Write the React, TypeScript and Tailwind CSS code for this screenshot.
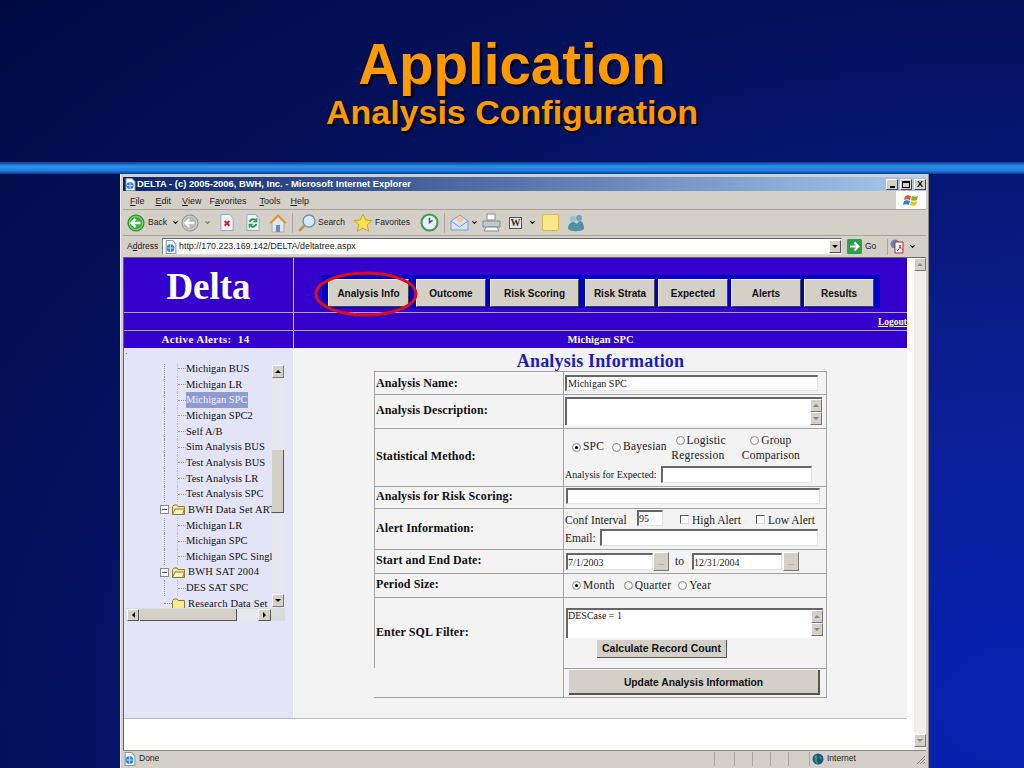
import type { ReactNode } from "react";
import { ChevronDown, Minus } from "lucide-react";

const navItems = [
  { label: "Analysis Info", cls: "ml-[6px] w-[81px]" },
  { label: "Outcome", cls: "ml-[7px] w-[70px]" },
  { label: "Risk Scoring", cls: "ml-[4px] w-[89px]" },
  { label: "Risk Strata", cls: "ml-[6px] w-[70px]" },
  { label: "Expected", cls: "ml-[3px] w-[70px]" },
  { label: "Alerts", cls: "ml-[3px] w-[70px]" },
  { label: "Results", cls: "ml-[3px] w-[70px]" },
];

const treeItems = [
  { label: "Michigan BUS" },
  { label: "Michigan LR" },
  { label: "Michigan SPC", selected: true },
  { label: "Michigan SPC2" },
  { label: "Self A/B" },
  { label: "Sim Analysis BUS" },
  { label: "Test Analysis BUS" },
  { label: "Test Analysis LR" },
  { label: "Test Analysis SPC" },
  { label: "BWH Data Set ART", folder: true },
  { label: "Michigan LR" },
  { label: "Michigan SPC" },
  { label: "Michigan SPC Single" },
  { label: "BWH SAT 2004", folder: true },
  { label: "DES SAT SPC" },
  { label: "Research Data Set", folder: true, closed: true },
];

function IeDoc({ size = 13 }: { size?: number }) {
  return (
    <svg width={size} height={size} viewBox="0 0 13 13" className="shrink-0">
      <path d="M2 .5h6l3 3v9H2z" fill="#fff" stroke="#7f9db9" />
      <circle cx="6" cy="7.5" r="3.6" fill="#2f7fd6" />
      <path d="M3 7.5h6M6 4v7" stroke="#bfe0ff" strokeWidth="1" />
    </svg>
  );
}

function CircleArrow({ color, edge }: { color: string; edge: string }) {
  return (
    <svg width="18" height="18" viewBox="0 0 20 20" className="shrink-0">
      <circle cx="10" cy="10" r="9" fill={color} stroke={edge} />
      <circle cx="10" cy="10" r="7.5" fill="none" stroke="#fff" strokeOpacity="0.45" />
      <path d="M15 10H6M9.5 5.500 5 10l4.500 4.500" fill="none" stroke="#fff" strokeWidth="2.6" />
    </svg>
  );
}

function ToolIcons() {
  return (
    <>
      <svg width="16" height="19" viewBox="0 0 17 19" className="ml-[8px]">
        <path d="M2 1h9l4 4v13H2z" fill="#eef2fa" stroke="#8fa6c8" />
        <path d="M6 8l5 5M11 8l-5 5" stroke="#d8232a" strokeWidth="2.2" />
      </svg>
      <svg width="16" height="19" viewBox="0 0 17 19" className="ml-[10px]">
        <path d="M2 1h9l4 4v13H2z" fill="#eef2fa" stroke="#8fa6c8" />
        <path d="M5 9a3.6 3.6 0 0 1 6.500-1.500M12 11a3.600 3.600 0 0 1-6.500 1.500" fill="none" stroke="#23994a" strokeWidth="2" />
        <path d="M12.500 5v3.500H9M4.500 15v-3.500H8" fill="none" stroke="#23994a" strokeWidth="1.300" />
      </svg>
      <svg width="20" height="20" viewBox="0 0 20 20" className="ml-[7px]">
        <path d="M10 2 2 10h2v9h12v-9h2z" fill="#dfe6f2" stroke="#b9a58a" />
        <path d="M10 1 1 10h3l6-6 6 6h3z" fill="#e8902c" />
        <rect x="8" y="12" width="4" height="7" fill="#5b8fd0" />
      </svg>
      <span className="ml-[4px] h-[20px] w-px bg-[#aaa69c]" />
      <svg width="20" height="20" viewBox="0 0 20 20" className="ml-[4px]">
        <circle cx="12" cy="8" r="6" fill="#d7ebfb" stroke="#6d93bd" strokeWidth="1.400" />
        <path d="M7.500 12.500 2 18" stroke="#c9924a" strokeWidth="2.600" />
      </svg>
      <span className="ml-px w-[27px] text-[8.5px] text-[#222]">Search</span>
      <svg width="20" height="20" viewBox="0 0 20 20" className="ml-[8px]">
        <path d="m10 1 2.700 6 6.300.6-4.800 4.200 1.500 6.400L10 15l-5.700 3.200 1.500-6.400L1 7.600 7.300 7z" fill="#fbe24c" stroke="#c9a520" />
      </svg>
      <span className="ml-[2px] w-[36px] text-[8.5px] text-[#222]">Favorites</span>
      <svg width="19" height="19" viewBox="0 0 18 18" className="ml-[9px]">
        <circle cx="9" cy="9" r="7.600" fill="#e9eff5" stroke="#3f9a52" strokeWidth="2" />
        <path d="M9 4.500V9l3-2" fill="none" stroke="#2a5fa0" strokeWidth="1.500" />
      </svg>
      <span className="ml-[5px] h-[20px] w-px bg-[#aaa69c]" />
      <svg width="20" height="19" viewBox="0 0 20 19" className="ml-[5px]">
        <path d="M1 8 10 2l8 6v9H1z" fill="#d4e4f6" stroke="#7f9db9" />
        <path d="m1 8 8.500 6L18 8" fill="none" stroke="#7f9db9" />
        <circle cx="10" cy="6" r="3" fill="#f3c79a" />
      </svg>
      <ChevronDown size={7} strokeWidth={4} className="ml-px text-black" />
      <svg width="19" height="19" viewBox="0 0 19 19" className="ml-[4px]">
        <path d="M5 1h8v6H5z" fill="#fff" stroke="#8a8a8a" />
        <path d="M1 8h17v6H1z" fill="#c3c6ce" stroke="#85888f" />
        <path d="M4 14h11l2 4H2z" fill="#f4f4f4" stroke="#8a8a8a" />
      </svg>
      <span className="ml-[8px] flex h-[12px] w-[13px] items-center justify-center border border-[#555] bg-[#e8e8e2] font-['Liberation_Serif',serif] text-[10px] leading-none font-bold text-[#333]">
        W
      </span>
      <ChevronDown size={7} strokeWidth={4} className="ml-[7px] text-black" />
      <span className="ml-[6px] h-[17px] w-[17px] rounded-[2px] border border-[#e0b840] bg-[#fbe88a]" />
      <svg width="18" height="18" viewBox="0 0 18 18" className="ml-[8px]">
        <circle cx="6" cy="5" r="3" fill="#8ec3d4" />
        <circle cx="12" cy="4" r="3" fill="#6aa5b8" />
        <path d="M1 15c0-5 3-7 5-7s3 1 4 2c1-2 2-3 3-3 3 0 4 4 4 8-3 3-13 3-16 0z" fill="#4e93a8" />
      </svg>
    </>
  );
}

function Radio({ on = false, className = "" }: { on?: boolean; className?: string }) {
  return (
    <span className={`inline-flex h-[9px] w-[9px] shrink-0 items-center justify-center rounded-full border border-[#888] bg-[#f8f8f8] ${className}`}>
      {on && <span className="h-[3px] w-[3px] rounded-full bg-black" />}
    </span>
  );
}

function Check({ className }: { className: string }) {
  return <span className={`inline-block h-[9px] w-[9px] shrink-0 self-center border border-t-[#555] border-r-[#ddd] border-b-[#ddd] border-l-[#555] bg-white ${className}`} />;
}

function Field({ className, children }: { className: string; children?: ReactNode }) {
  return (
    <div className={`flex shrink-0 items-center overflow-hidden border-t-2 border-r border-b border-l-2 border-t-[#666] border-r-[#e2e2e2] border-b-[#e2e2e2] border-l-[#666] bg-white text-[10px] text-[#222] ${className}`}>
      {children}
    </div>
  );
}

function Arrow({ up, dark }: { up?: boolean; dark?: boolean }) {
  const tip = up
    ? dark ? "border-b-[3px] border-b-black" : "border-b-[3px] border-b-[#888]"
    : dark ? "border-t-[3px] border-t-black" : "border-t-[3px] border-t-[#888]";
  return (
    <span className="flex h-[13px] w-[12px] shrink-0 items-center justify-center border border-t-white border-r-[#777] border-b-[#777] border-l-white bg-[#d4d0c8]">
      <span className={`h-0 w-0 border-x-[3px] border-x-transparent ${tip}`} />
    </span>
  );
}

function FormRow({ label, height, labelPad = "pb-[3px]", children }: { label?: string; height: string; labelPad?: string; children: ReactNode }) {
  return (
    <div className={`flex ${height}`}>
      <div className={`flex w-[189px] items-center pl-px text-[12px] font-bold tracking-[0.1px] text-[#111] ${labelPad} ${label ? "border-t border-l border-t-[#a3a3a3] border-l-[#a3a3a3]" : ""}`}>
        {label}
      </div>
      <div className="w-[263px] border-t border-l border-t-[#a3a3a3] border-l-[#a3a3a3]">{children}</div>
    </div>
  );
}

function SmallBtn({ className = "" }: { className?: string }) {
  return (
    <span className={`flex h-[19px] w-[16px] shrink-0 items-end justify-center border border-t-white border-r-[#777] border-b-[#777] border-l-white bg-[#d4d0c8] pb-[3px] text-[8px] leading-none text-[#777] ${className}`}>
      ...
    </span>
  );
}

function TreePanel() {
  return (
    <div className="relative pt-[16px] pl-[2px]">
      <span className="absolute top-[5px] left-[2px] h-px w-px bg-[#777]" />
      <div className="w-[159px]">
        <div className="flex h-[244px]">
          <div className="w-[146px] overflow-hidden font-['Liberation_Serif',serif] text-[10.5px] text-[#111]">
            <div className="-mt-[3px]">
              {treeItems.map((item, i) =>
                item.folder ? (
                  <div key={i} className="flex h-[15.66px] items-center whitespace-nowrap">
                    <span className="ml-[34px] flex w-[12px] shrink-0 items-center">
                      {item.closed ? (
                        <span className="ml-[4px] h-0 w-[8px] border-t border-dotted border-[#888]" />
                      ) : (
                        <span className="flex h-[9px] w-[9px] items-center justify-center border border-[#888] bg-white">
                          <Minus size={7} strokeWidth={3} className="text-[#333]" />
                        </span>
                      )}
                    </span>
                    <svg width="13" height="11" viewBox="0 0 13 11" className="mr-[3px] shrink-0">
                      <path d="M.5 2.500 2 1h3l1 1.500h6.500v8H.5z" fill="#fbe89a" stroke="#8c7a3a" />
                      {!item.closed && <path d="M.5 10.500 3 5h9.500l-2 5.500z" fill="#fdf3bb" stroke="#8c7a3a" />}
                    </svg>
                    <span className="tracking-[0.15px]">{item.label}</span>
                  </div>
                ) : (
                  <div key={i} className="flex h-[15.66px] items-center whitespace-nowrap">
                    <span className="ml-[38px] h-full w-[13px] shrink-0 border-l border-dotted border-[#999]" />
                    <span className="h-full w-px shrink-0 border-l border-dotted border-[#bbb]" />
                    <span className="h-0 w-[8px] shrink-0 border-t border-dotted border-[#999]" />
                    <span className={item.selected ? "bg-[#8f9bcf] text-[#eef]" : ""}>{item.label}</span>
                  </div>
                ),
              )}
            </div>
          </div>
          <div className="flex w-[12px] flex-col bg-[#e7e6ec] pt-px pb-px">
            <Arrow up dark />
            <div className="mt-[72px] h-[63px] w-[12px] border-r border-b border-r-[#555] border-b-[#555] bg-[#d4d0c8]" />
            <div className="flex-1" />
            <Arrow dark />
          </div>
        </div>
        <div className="flex h-[13px] items-center bg-[#dcdbdc]">
          <span className="ml-px flex h-[12px] w-[12px] items-center justify-center border border-t-white border-r-[#555] border-b-[#555] border-l-white bg-[#d4d0c8]">
            <span className="h-0 w-0 border-y-[3px] border-r-[3px] border-y-transparent border-r-black" />
          </span>
          <span className="ml-px h-[12px] w-[97px] border-r border-b border-r-[#555] border-b-[#555] bg-[#d4d0c8]" />
          <span className="h-[12px] w-[21px] bg-[#e7e6ec]" />
          <span className="flex h-[12px] w-[13px] items-center justify-center border border-t-white border-r-[#555] border-b-[#555] border-l-white bg-[#d4d0c8]">
            <span className="h-0 w-0 border-y-[3px] border-l-[3px] border-y-transparent border-l-black" />
          </span>
        </div>
      </div>
    </div>
  );
}

function AnalysisForm() {
  return (
    <div className="mx-auto w-[453px] font-['Liberation_Serif',serif]">
      <div className="flex h-[23px] items-center justify-center pt-[3px] text-[18px] font-bold tracking-[0.2px] text-[#1a1ac8]">
        Analysis Information
      </div>
      <div className="border-r border-b border-[#a3a3a3] text-[11.5px] text-[#222]">
        <FormRow label="Analysis Name:" height="h-[23px]" labelPad="pb-0">
          <Field className="mt-[3px] ml-px h-[16px] w-[253px] pl-px">Michigan SPC</Field>
        </FormRow>
        <FormRow label="Analysis Description:" height="h-[34px]">
          <div className="mt-[2px] ml-px flex h-[28px] w-[257px] border-t-2 border-l-2 border-[#666] bg-white">
            <div className="flex-1" />
            <div className="flex flex-col">
              <Arrow up />
              <Arrow />
            </div>
          </div>
        </FormRow>
        <FormRow label="Statistical Method:" height="h-[58px]">
          <div className="flex h-[36px] items-center pl-[8px] tracking-[0.2px]">
            <Radio on />
            <span className="ml-[2px]">SPC</span>
            <Radio className="ml-[8px]" />
            <span className="ml-[2px]">Bayesian</span>
            <div className="ml-[3px] w-[56px] pt-px text-center leading-[15px]">
              <div className="flex items-center justify-end gap-[2px]"><Radio /><span>Logistic</span></div>
              <div>Regression</div>
            </div>
            <div className="ml-[16px] w-[58px] pt-px text-center leading-[15px]">
              <div className="flex items-center justify-center gap-[2px]"><Radio /><span>Group</span></div>
              <div>Comparison</div>
            </div>
          </div>
          <div className="flex h-[18px] items-center pl-px text-[10px]">
            Analysis for Expected:
            <Field className="ml-[4px] h-[17px] w-[151px]" />
          </div>
        </FormRow>
        <FormRow label="Analysis for Risk Scoring:" height="h-[22px]">
          <Field className="mt-px ml-[2px] h-[16px] w-[254px]" />
        </FormRow>
        <FormRow label="Alert Information:" height="h-[41px]">
          <div className="flex h-[20px] items-end pl-px">
            <span className="w-[63px]">Conf Interval</span>
            <Field className="mt-px ml-[9px] h-[16px] w-[26px] self-start">95</Field>
            <Check className="ml-[17px]" />
            <span className="ml-[3px]">High Alert</span>
            <Check className="ml-[15px]" />
            <span className="ml-[3px]">Low Alert</span>
          </div>
          <div className="flex h-[17px] pl-px">
            <span className="w-[28px] pt-px">Email:</span>
            <Field className="ml-[7px] h-[17px] w-[218px]" />
          </div>
        </FormRow>
        <FormRow label="Start and End Date:" height="h-[24px]">
          <div className="flex h-full items-center pl-[2px]">
            <Field className="h-[17px] w-[87px]">7/1/2003</Field>
            <SmallBtn />
            <span className="ml-[6px] w-[17px]">to</span>
            <Field className="h-[17px] w-[90px]">12/31/2004</Field>
            <SmallBtn className="ml-px" />
          </div>
        </FormRow>
        <FormRow label="Period Size:" height="h-[24px]">
          <div className="flex h-full items-center pl-[8px] tracking-[0.2px]">
            <Radio on />
            <span className="ml-[2px]">Month</span>
            <Radio className="ml-[9px]" />
            <span className="ml-[2px]">Quarter</span>
            <Radio className="ml-[7px]" />
            <span className="ml-[2px]">Year</span>
          </div>
        </FormRow>
        <FormRow label="Enter SQL Filter:" height="h-[71px]">
          <div className="mt-[10px] ml-[2px] flex h-[30px] w-[257px] border-t-2 border-l-2 border-[#666] bg-white text-[10px]">
            <div className="flex-1 leading-[12px]">DESCase = 1</div>
            <div className="flex flex-col">
              <Arrow up />
              <Arrow />
            </div>
          </div>
          <div className="mt-[2px] ml-[33px] flex h-[18px] w-[130px] items-center justify-center border-r border-b border-r-[#555] border-b-[#555] bg-[#d4d0c8] font-['Liberation_Sans',sans-serif] text-[10.5px] font-bold text-[#111]">
            Calculate Record Count
          </div>
        </FormRow>
        <FormRow height="h-[29px]">
          <div className="mt-px ml-[5px] flex h-[25px] w-[251px] items-center justify-center border-r-2 border-b-2 border-r-[#555] border-b-[#555] bg-[#d4d0c8] pt-[3px] font-['Liberation_Sans',sans-serif] text-[10.3px] font-bold text-[#111]">
            Update Analysis Information
          </div>
        </FormRow>
      </div>
    </div>
  );
}

function PageContent() {
  return (
    <div className="flex w-[783px] flex-col">
      <div className="flex h-[55px] border-b border-[#a9a0f0] bg-[#3300cc]">
        <div className="flex w-[170px] items-center justify-center border-r border-[#c9c4f5] pt-[4px] font-['Liberation_Serif',serif] text-[37px] font-bold text-white">
          Delta
        </div>
        <div className="relative flex-1">
          <div className="mt-[17px] ml-[28px] flex h-[33px] w-[558px] items-start bg-[#0000c8] pt-[4px]">
            {navItems.map((n) => (
              <div key={n.label} className={`flex h-[28px] items-center justify-center border border-t-[#f0f0f0] border-r-[#444] border-b-[#444] border-l-[#f0f0f0] bg-[#d4d0c8] font-['Liberation_Sans',sans-serif] text-[10px] font-bold text-[#111] ${n.cls}`}>
                {n.label}
              </div>
            ))}
          </div>
          <svg width="104" height="48" viewBox="0 0 104 48" className="absolute top-[12px] left-[20px]">
            <ellipse cx="52" cy="24" rx="50" ry="21" fill="none" stroke="#d8101c" strokeWidth="3" />
          </svg>
        </div>
      </div>
      <div className="flex h-[18px] border-b border-[#a9a0f0] bg-[#3300cc]">
        <div className="w-[170px] border-r border-[#c9c4f5]" />
        <div className="flex-1 pt-px text-right font-['Liberation_Serif',serif] text-[9.5px] leading-[17px] font-bold text-white underline">
          Logout
        </div>
      </div>
      <div className="flex h-[17px] bg-[#3300cc] font-['Liberation_Serif',serif] text-[11px] leading-[17px] font-bold text-white">
        <div className="w-[170px] border-r border-[#c9c4f5] pr-[6px] text-center tracking-[0.4px]">Active Alerts:&nbsp; 14</div>
        <div className="flex-1 text-center text-[10.5px] tracking-[0.1px]">Michigan SPC</div>
      </div>
      <div className="flex h-[371px] border-b border-[#bbb]">
        <div className="w-[170px] border-r border-[#fff] bg-[#e4e4f8]">
          <TreePanel />
        </div>
        <div className="flex-1 bg-[#f3f3f3]">
          <AnalysisForm />
        </div>
      </div>
    </div>
  );
}

export default function App() {
  return (
    <div className="flex h-[768px] w-[1024px] flex-col overflow-hidden bg-[radial-gradient(ellipse_at_100%_92%,#0822b4_0%,#0a1e90_35%,#03115f_68%,#000a42_100%)] font-['Liberation_Sans',sans-serif]">
      <div className="flex h-[162px] flex-col items-center pt-[33px] font-bold text-[#ff9900] [text-shadow:2px_2px_1px_#000]">
        <div className="text-[56.5px] leading-[64px]">Application</div>
        <div className="-mt-[3px] text-[34px] leading-[36px]">Analysis Configuration</div>
      </div>
      <div className="h-[12px] bg-[linear-gradient(180deg,#0a3a90_0%,#2a90ea_35%,#2080e0_70%,#0a3a90_100%)]" />

      <div className="ml-[120px] flex w-[809px] flex-1 flex-col border-r border-l border-r-[#888] border-l-[#eee] bg-[#d4d0c8] px-[2px] pt-[3px] text-[#222]">
        <div className="flex h-[14px] items-center bg-[linear-gradient(90deg,#0a246a,#a6caf0)] pl-[1px]">
          <IeDoc />
          <span className="flex-1 text-[9.4px] font-bold text-white">DELTA - (c) 2005-2006, BWH, Inc. - Microsoft Internet Explorer</span>
          <span className="flex h-[11px] w-[12px] items-end justify-center border border-t-white border-r-[#444] border-b-[#444] border-l-white bg-[#d4d0c8] pb-px">
            <span className="h-[2px] w-[5px] bg-black" />
          </span>
          <span className="ml-[2px] flex h-[11px] w-[12px] items-center justify-center border border-t-white border-r-[#444] border-b-[#444] border-l-white bg-[#d4d0c8]">
            <span className="h-[7px] w-[8px] border border-t-2 border-black" />
          </span>
          <span className="ml-[2px] flex h-[11px] w-[12px] items-center justify-center border border-t-white border-r-[#444] border-b-[#444] border-l-white bg-[#d4d0c8] text-[9px] leading-none font-bold text-black">
            X
          </span>
        </div>
        <div className="flex h-[19px] items-center border-b border-[#a8a49c] pl-[7px] text-[9px]">
          <div className="flex flex-1 pt-[3px]">
            <span><u>F</u>ile</span>
            <span className="ml-[11px]"><u>E</u>dit</span>
            <span className="ml-[11px]"><u>V</u>iew</span>
            <span className="ml-[8px]">F<u>a</u>vorites</span>
            <span className="ml-[13px]"><u>T</u>ools</span>
            <span className="ml-[10px]"><u>H</u>elp</span>
          </div>
          <span className="flex h-[18px] w-[30px] items-center justify-center bg-white">
            <svg width="17" height="15" viewBox="0 0 15 15">
              <path d="M1 3c2-1 4-1 6 0L6 7C4 6 2 6 0 7z" fill="#e2572a" />
              <path d="M8 3c2 1 4 1 6 0l-1 4c-2 1-4 1-6 0z" fill="#7cb52e" />
              <path d="M0 8c2-1 4-1 6 0l-1 4c-2-1-4-1-6 0z" fill="#2f7fd6" />
              <path d="M7 8c2 1 4 1 6 0l-1 4c-2 1-4 1-6 0z" fill="#f4c020" />
            </svg>
          </span>
        </div>
        <div className="flex h-[26px] items-center border-b border-[#a8a49c] pl-[4px]">
          <CircleArrow color="#3fae3f" edge="#2a7a2a" />
          <span className="ml-[3px] w-[18px] text-[8.5px]">Back</span>
          <ChevronDown size={7} strokeWidth={4} className="ml-[6px] text-black" />
          <span className="ml-[2px]"><CircleArrow color="#b6b6b0" edge="#8e8e88" /></span>
          <ChevronDown size={7} strokeWidth={4} className="ml-[5px] text-[#777]" />
          <ToolIcons />
        </div>
        <div className="flex h-[21px] items-center pl-[4px] text-[8.5px]">
          <span className="w-[31px]">A<u>d</u>dress</span>
          <div className="ml-[4px] flex h-[17px] w-[680px] shrink-0 items-center border border-t-[#666] border-r-[#ddd] border-b-[#ddd] border-l-[#888] bg-white pl-[1px]">
            <IeDoc size={14} />
            <span className="ml-px flex-1 text-[8.9px]">http://170.223.169.142/DELTA/deltatree.aspx</span>
            <span className="flex h-[13px] w-[12px] items-center justify-center border border-t-white border-r-[#555] border-b-[#555] border-l-white bg-[#d4d0c8]">
              <span className="h-0 w-0 border-x-[3px] border-t-[3px] border-x-transparent border-t-black" />
            </span>
          </div>
          <svg width="15" height="15" viewBox="0 0 15 15" className="ml-[5px] shrink-0">
            <rect width="15" height="15" rx="1.500" fill="#2f9e4a" />
            <path d="M3 7.500h8M7.500 3.500l4 4-4 4" fill="none" stroke="#fff" strokeWidth="2" />
          </svg>
          <span className="ml-[3px]">Go</span>
          <span className="ml-[11px] h-[16px] w-px bg-[#aaa69c]" />
          <svg width="15" height="15" viewBox="0 0 15 15" className="ml-[2px] shrink-0">
            <circle cx="5" cy="5" r="4.500" fill="#5c8bb5" />
            <path d="M5 3h8v11H5z" fill="#fff" stroke="#c8202c" />
            <path d="M7 12c2-1 3-4 3-6 0 3 1 4 3 5" fill="none" stroke="#c8202c" />
          </svg>
          <ChevronDown size={7} strokeWidth={4} className="ml-[4px] text-black" />
        </div>

        <div className="flex h-[493px] border-t border-l border-t-[#666] border-l-[#666] bg-white">
          <PageContent />
          <div className="ml-[7px] flex w-[12px] flex-col bg-[#f1f0ea] pb-[3px]">
            <Arrow up />
            <div className="flex-1" />
            <Arrow />
          </div>
        </div>

        <div className="flex h-[16px] items-center border-t border-[#888] text-[8.5px]">
          <IeDoc size={14} />
          <span className="ml-[2px] flex-1">Done</span>
          <span className="h-[14px] w-[20px] border-l border-[#aaa69c]" />
          <span className="h-[14px] w-[18px] border-l border-[#aaa69c]" />
          <span className="h-[14px] w-[18px] border-l border-[#aaa69c]" />
          <span className="h-[14px] w-[18px] border-l border-[#aaa69c]" />
          <span className="h-[14px] w-[21px] border-l border-[#aaa69c]" />
          <span className="flex h-[14px] w-[117px] items-center border-l border-[#aaa69c] pl-[2px]">
            <svg width="12" height="12" viewBox="0 0 12 12">
              <circle cx="6" cy="6" r="5.500" fill="#1d4f9c" />
              <path d="M3 2c2 0 3 2 2 4s1 3 1 5c-2 0-3-2-3-4S2 4 3 2zM8 3c2 1 2 3 1 4-1-1-2-3-1-4z" fill="#3aa04a" />
            </svg>
            <span className="ml-[3px] flex-1">Internet</span>
            <svg width="10" height="10" viewBox="0 0 10 10" className="mt-[3px]">
              <path d="M9 1 1 9M9 4 4 9M9 7 7 9" stroke="#8a877f" />
            </svg>
          </span>
        </div>
      </div>
    </div>
  );
}
